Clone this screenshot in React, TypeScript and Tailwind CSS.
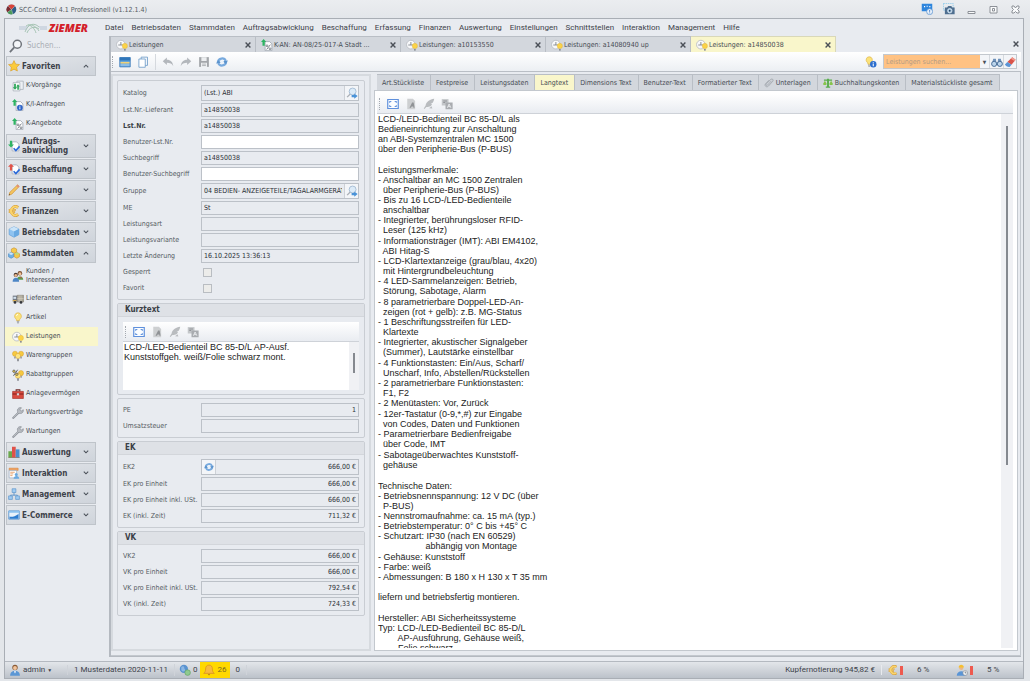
import React, { useState } from 'react';
import clsx from 'clsx';

type IconName =
  | 'logo' | 'search' | 'star' | 'docSwap' | 'docInfo' | 'docPercent' | 'order' | 'purchase' | 'pencil'
  | 'euro' | 'cube' | 'cubes' | 'people' | 'truck' | 'bulb' | 'service' | 'bulbs' | 'bulbsPercent'
  | 'case' | 'wrench' | 'chart' | 'interact' | 'org' | 'shop' | 'form' | 'copy' | 'undo' | 'redo'
  | 'save' | 'refresh' | 'bulbInfo' | 'binoculars' | 'eraser' | 'lens' | 'full' | 'fontDoc' | 'feather'
  | 'translate' | 'clip' | 'scales' | 'user' | 'globe' | 'bell' | 'worker' | 'monitor' | 'camera';

const bulb = (
  <>
    <path d="M8 1a4.6 4.6 0 0 0-2.8 8.2c.6.6.8 1.2.9 2.3h3.8c.1-1.100.3-1.700.9-2.300A4.600 4.600 0 0 0 8 1z" fill="#fbe27a" stroke="#dcae3c" strokeWidth=".8" />
    <path d="M6.400 12.300h3.200M6.600 13.600h2.800M7.200 14.800h1.600" stroke="#8b8f96" strokeWidth="1" />
    <path d="M6 5.200A2.300 2.300 0 0 1 8 3" stroke="#fff" strokeWidth="1.100" fill="none" />
  </>
);

const percentSheet = (
  <>
    <path d="M5.500 3.500h6l3 3v9h-9z" fill="#fff" stroke="#9aa1ab" />
    <path d="M12.500 7.500l-5 6.500" stroke="#555b64" strokeWidth="1" />
    <circle cx="8" cy="9" r="1.200" fill="none" stroke="#555b64" strokeWidth=".9" />
    <circle cx="12" cy="13" r="1.200" fill="none" stroke="#555b64" strokeWidth=".9" />
  </>
);

const upArrow = <path d="M3.500 0L7 4H5v5H2V4H0z" fill="#2fb463" />;

const checkSheet = (
  <>
    <path d="M5.500 2.500h6l3 3v9h-9z" fill="#fff" stroke="#9fa8b6" />
    <path d="M7.500 11l3 3L15.500 8.500" fill="none" stroke="#2968d8" strokeWidth="2.200" />
  </>
);

const icons: Record<IconName, React.ReactNode> = {
  logo: (
    <>
      <circle cx="8" cy="8" r="7" fill="#2f5d86" />
      <path d="M8 8L3 3a7 7 0 0 1 10 0z" fill="#d84339" />
      <path d="M8 8L3 3a7 7 0 0 0-1 9z" fill="#7c2b30" />
      <path d="M8 8l-6 4a7 7 0 0 0 8 2.700z" fill="#4a9a57" />
      <path d="M8 8l5-5M8 8l-6 4M8 8l2 7M8 8L3 3" stroke="#f4f4f4" strokeWidth=".5" />
    </>
  ),
  search: (
    <>
      <circle cx="9.500" cy="6" r="4.600" fill="#f4f6f9" stroke="#6f747b" strokeWidth="1.700" />
      <path d="M6 9.500L1 15" stroke="#6f747b" strokeWidth="2" />
    </>
  ),
  star: <path d="M8 .8l2.200 4.700 5.100.6-3.800 3.500 1 5.100L8 12.200l-4.500 2.500 1-5.100L.7 6.100l5.100-.6z" fill="#fbcb3c" stroke="#d99a1f" strokeWidth=".8" />,
  docSwap: (
    <>
      <path d="M6.500 1.500h8.500v11H6.500z" fill="#eef1f5" stroke="#a4abb5" />
      <path d="M1.500 3.500h9v11h-9z" fill="#fff" stroke="#a4abb5" />
      <path d="M2.800 5h2.400v4.500H7L4 13 1 9.500h1.800zM7 13V8.500H5.500L8 5.500l2.500 3H9.200V13z" fill="#2fa85c" />
    </>
  ),
  docInfo: (
    <>
      <path d="M5.500 3.500h6l3 3v9h-9z" fill="#fff" stroke="#9aa1ab" />
      {upArrow}
      <circle cx="10.500" cy="11.500" r="3.800" fill="#2d63c8" />
      <path d="M10.500 11v2.800M10.500 9v1.200" stroke="#fff" strokeWidth="1.300" />
    </>
  ),
  docPercent: <>{percentSheet}{upArrow}</>,
  order: <>{checkSheet}<path d="M2.500 1h3v5H8l-4 4-4-4h2.500z" fill="#2fb463" /></>,
  purchase: <>{checkSheet}<path d="M4 1L8 5H5.500v5h-3V5H0z" fill="#e05349" /></>,
  pencil: (
    <>
      <path d="M12.800 1l2.200 2.200L5 13.500 1.200 15l1.300-3.900z" fill="#f4c560" stroke="#c98a30" strokeWidth=".8" />
      <path d="M12.800 1l2.200 2.200-1.500 1.500-2.200-2.200z" fill="#e28a80" />
      <path d="M1.200 15l.5-1.700 1.200 1.100z" fill="#444" />
    </>
  ),
  euro: (
    <>
      <path d="M13.500 3.200A5.800 5.800 0 1 0 13.500 12.800" fill="none" stroke="#d39a34" strokeWidth="4" />
      <path d="M1 6.500h9.500M1 9.500h8.500" stroke="#d39a34" strokeWidth="2.200" />
      <path d="M13.200 3.600A5.600 5.600 0 1 0 13.200 12.400" fill="none" stroke="#fad46c" strokeWidth="2.600" />
      <path d="M1.500 6.500H10M1.500 9.500H9" stroke="#fad46c" strokeWidth="1.200" />
    </>
  ),
  cube: (
    <>
      <path d="M8 1l6.500 3v7.500L8 15l-6.500-3.500V4z" fill="#8fc3f0" stroke="#5c9ad2" strokeWidth=".8" />
      <path d="M8 1l6.500 3L8 7.200 1.500 4z" fill="#cbe4f8" />
      <path d="M8 7.200V15l6.500-3.500V4z" fill="#6aaae2" />
    </>
  ),
  cubes: (
    <>
      <path d="M8 1l3.500 1.700v4L8 8.500 4.500 6.700v-4z" fill="#f7c84a" stroke="#c08a28" strokeWidth=".7" />
      <path d="M4.200 7.200L7.700 9v4l-3.500 2L.7 13V9z" fill="#6fb0e6" stroke="#3f7fb8" strokeWidth=".7" />
      <path d="M11.800 7.200L15.300 9v4l-3.500 2-3.500-2V9z" fill="#f7c84a" stroke="#c08a28" strokeWidth=".7" />
      <path d="M8.300 9l3.500 1.600L15.300 9l-3.500-1.800z" fill="#b9dd7c" />
      <path d="M.7 9l3.500 1.600L7.700 9 4.200 7.200z" fill="#cde5f8" />
    </>
  ),
  people: (
    <>
      <circle cx="10.500" cy="4.200" r="3" fill="#7c4f2e" />
      <circle cx="10.500" cy="5" r="2" fill="#f1c39b" />
      <path d="M6.500 13c0-6 8.500-6 8.500 0z" fill="#5b9a4d" />
      <circle cx="5" cy="6.500" r="2.800" fill="#4c3a30" />
      <circle cx="5" cy="7.300" r="1.900" fill="#eab58a" />
      <path d="M.8 15.500c0-7 8.700-7 8.700 0z" fill="#4d86c6" />
      <path d="M11 9l1 3 1-3z" fill="#d64b40" />
    </>
  ),
  truck: (
    <>
      <path d="M1 3.500h6v8H1z" fill="#737a84" />
      <path d="M7 3h8.500v9H7z" fill="#a9a497" stroke="#6f6a5f" strokeWidth=".6" />
      <path d="M9.500 3v9M12 3v9M7 7.500h8.500" stroke="#e5dfcd" strokeWidth=".7" />
      <path d="M1.800 5h3.700v2.800H1.800z" fill="#d3e1ee" />
      <path d="M1 9.500h5v1.500H1z" fill="#e7b64b" />
      <circle cx="4" cy="12.500" r="1.800" fill="#33363b" />
      <circle cx="12" cy="12.500" r="1.800" fill="#33363b" />
    </>
  ),
  bulb,
  service: (
    <>
      <circle cx="6.500" cy="7.500" r="5.800" fill="#f7f8fa" stroke="#b3b7bd" strokeWidth="1" />
      <path d="M6.500 4v4h3.500M3 8h3.500" stroke="#6b7179" strokeWidth="1" fill="none" />
      <circle cx="11.800" cy="9.300" r="3.500" fill="#fbd348" stroke="#dcae3c" strokeWidth=".5" />
      <path d="M10.600 13.200h2.400v2.300h-2.400z" fill="#8c8f96" />
    </>
  ),
  bulbs: (
    <>
      <circle cx="4" cy="5" r="3.400" fill="#f7c93f" stroke="#d29b2a" strokeWidth=".6" />
      <circle cx="12" cy="5" r="3.400" fill="#f7c93f" stroke="#d29b2a" strokeWidth=".6" />
      <circle cx="8" cy="8" r="3.500" fill="#fde480" stroke="#d29b2a" strokeWidth=".6" />
      <path d="M6.800 11.500h2.400V15H6.800zM3 8.500h1.800v2.800H3zM11.200 8.500H13v2.800h-1.800z" fill="#8c8f96" />
    </>
  ),
  bulbsPercent: (
    <>
      <circle cx="12" cy="5.500" r="3.400" fill="#f7c93f" stroke="#d29b2a" strokeWidth=".6" />
      <circle cx="8" cy="9" r="3.500" fill="#fde480" stroke="#d29b2a" strokeWidth=".6" />
      <path d="M6.800 12.300h2.400V15.500H6.800zM11.500 9H13v2.800h-1.500z" fill="#8c8f96" />
      <path d="M7.500 1l-5.500 8" stroke="#4b4f56" strokeWidth="1.200" />
      <circle cx="2.600" cy="3" r="1.600" fill="#fbd348" stroke="#4b4f56" />
      <circle cx="6.500" cy="7" r="1.600" fill="#fbd348" stroke="#4b4f56" />
    </>
  ),
  case: (
    <>
      <path d="M5.500 4.500v-2h5v2" stroke="#6e2a26" strokeWidth="1.400" fill="none" />
      <path d="M.8 4.500h14.400v9.500H.8z" fill="#d8493e" stroke="#a02a22" strokeWidth=".8" />
      <path d="M.8 8h14.400" stroke="#7d201b" strokeWidth="1.300" />
      <path d="M6.500 7h3v2.800h-3z" fill="#d3d6da" />
    </>
  ),
  wrench: (
    <>
      <path d="M1.700 14.500L10 6.200" stroke="#8c9199" strokeWidth="2.800" strokeLinecap="round" />
      <path d="M15 3.600l-2.500 1.800-1.800-1.800L12.600 1A4 4 0 1 0 15 3.600z" fill="#b5b9bf" stroke="#858a92" strokeWidth=".8" />
      <path d="M2 14.200L10 6.200" stroke="#c9cdd2" strokeWidth="1.100" />
    </>
  ),
  chart: (
    <>
      <path d="M.5 7h4.800v8.500H.5z" fill="#6aa84c" />
      <path d="M5.300 1h5v14.500h-5z" fill="#e0524a" />
      <path d="M10.300 4.500h5v11h-5z" fill="#4c8fce" />
      <path d="M.5 15.500h15" stroke="#77624a" strokeWidth=".8" />
    </>
  ),
  interact: (
    <>
      <path d="M1.500 1.500h12v3h-12z" fill="#f4a460" stroke="#d18240" strokeWidth=".7" />
      <path d="M1.500 4.500h10v10h-10z" fill="#fff" stroke="#8b9fb8" strokeWidth=".8" />
      <path d="M3 7h6M3 9.200h4M3 11.500h3" stroke="#e08a45" strokeWidth="1" />
      <circle cx="11" cy="10" r="2" fill="#6aa9e0" />
      <path d="M7.500 15.500c0-4.800 7.500-4.800 7.500 0z" fill="#6aa9e0" />
    </>
  ),
  org: (
    <>
      <path d="M8 6v4M3.500 11.500V9.500h9v2" stroke="#5c94c9" strokeWidth="1.200" fill="none" />
      <path d="M5.500 1h5v5h-5zM.8 10.500h5v4.700h-5zM10.200 10.500h5v4.700h-5z" fill="#9fcbf2" stroke="#5c94c9" strokeWidth=".9" />
    </>
  ),
  shop: (
    <>
      <path d="M1 2.500h14v11H1z" fill="#e8f2fb" stroke="#5d96cf" strokeWidth="1.200" />
      <path d="M1 2.500h14v2.500H1z" fill="#8cc2ef" />
      <path d="M2 13V10c3 1 7 0 12-3.500V13z" fill="#2d7dd0" />
    </>
  ),
  form: (
    <>
      <path d="M1 2h14v12.500H1z" fill="#5fa3de" stroke="#3b78b5" strokeWidth="1" />
      <path d="M1 2h14v4H1z" fill="#2f76ba" />
      <path d="M2 9h12" stroke="#f0d27a" strokeWidth="2.200" />
      <path d="M2 12h12" stroke="#a9d0f2" strokeWidth="1.600" />
    </>
  ),
  copy: (
    <>
      <path d="M5.500 1.500h8.500v11H5.500z" fill="#f1f6fb" stroke="#6f9cc8" strokeWidth="1.100" />
      <path d="M2.500 4h8.500v11H2.500z" fill="#fff" stroke="#6f9cc8" strokeWidth="1.100" />
    </>
  ),
  undo: <path d="M1 7l5.500-5v3c5 0 8 3 8.500 8.500C13.500 10 10.500 9 6.500 9v3z" fill="#b3b7bc" />,
  redo: <path d="M15 7L9.500 2v3c-5 0-8 3-8.500 8.500C2.500 10 5.500 9 9.500 9v3z" fill="#b3b7bc" />,
  save: (
    <>
      <path d="M1.500 1.500h13v13h-13z" fill="#a3a6aa" />
      <path d="M4.500 1.500h7v5h-7zM4 9h8v5.500H4z" fill="#eceef0" />
      <path d="M5.500 10.800h5M5.500 12.700h5" stroke="#a3a6aa" />
    </>
  ),
  refresh: (
    <>
      <path d="M2.500 8.500C3 2.500 11 1.500 13 6.500M13.500 7.500c-.5 6-8.500 7-10.500 2" fill="none" stroke="#78aade" strokeWidth="3" />
      <path d="M16 6l-3 4.500-4-3.500zM0 10l3-4.500L7 9z" fill="#5b93cd" />
      <circle cx="8" cy="8" r="2.400" fill="#eaf2fb" />
    </>
  ),
  bulbInfo: (
    <>
      <path d="M5.500 1a4.200 4.200 0 0 0-2.400 7.500c.6.600.7 1.200.8 2.500h3.500c0-1.300.3-1.900.8-2.500A4.200 4.200 0 0 0 5.500 1z" fill="#fbe27a" stroke="#dcae3c" strokeWidth=".8" />
      <path d="M4 12.200h3.200M4.400 13.800h2.400" stroke="#8b8f96" />
      <circle cx="11" cy="11" r="4.300" fill="#2d6fce" />
      <path d="M11 10.300v3.200M11 8.200v1.300" stroke="#fff" strokeWidth="1.400" />
    </>
  ),
  binoculars: (
    <>
      <path d="M3 3.500h3.500L7.500 11H1zM9.500 3.500H13L15 11H8.500z" fill="#6f92ba" />
      <circle cx="4.200" cy="10.500" r="3.400" fill="#bcd5ec" stroke="#4a6f98" strokeWidth="1.300" />
      <circle cx="11.800" cy="10.500" r="3.400" fill="#bcd5ec" stroke="#4a6f98" strokeWidth="1.300" />
    </>
  ),
  eraser: (
    <>
      <path d="M11 1.500L15.500 5 10 11.500 4.500 8z" fill="#d9544a" />
      <path d="M4.500 8L10 11.500 7.500 14.500C6.500 15.500 1.500 13 1.200 11.300z" fill="#5c95d6" />
      <path d="M11 1.500L15.500 5 14 6.800 9 3.500z" fill="#f19a8c" />
    </>
  ),
  lens: (
    <>
      <circle cx="8.800" cy="6" r="4.600" fill="#dcebf8" stroke="#a9bfd6" strokeWidth="1.300" />
      <path d="M5.500 9.500L1.500 13.500" stroke="#a9aeb6" strokeWidth="1.800" />
      <path d="M7.500 10.500h3.500V8.500l4.500 3.500-4.500 3.500v-2H7.500z" fill="#4a93d8" />
    </>
  ),
  full: (
    <>
      <path d="M1 2h14v12H1z" fill="#fbfdff" stroke="#5f90dc" strokeWidth="1.600" />
      <path d="M3 4h3.500L3 7zM13 4H9.500L13 7zM3 12h3.500L3 9zM13 12H9.500L13 9z" fill="#5f90dc" />
    </>
  ),
  fontDoc: (
    <>
      <path d="M3 1h7.500L13.500 4v11H3z" fill="#cdcfd1" />
      <path d="M9.500 6L6 13h2l.8-1.800H11l.3 1.800h1.500L11.500 6z" fill="#8f9295" />
    </>
  ),
  feather: <path d="M15 1C9 2 4 5 3.500 10L1 14l1 .8L4.500 12c5 0 7-2 7.500-4.500l-2-.3 3-.9c1-1.800 1.700-3.500 2-5.300zM8 13.500l3.500-2.500 1 3z" fill="#b9bcbf" />,
  translate: (
    <>
      <path d="M1 1.500h9v8.500H1z" fill="#c3c6c9" />
      <path d="M6 6h9.500v9H6z" fill="#a9acb0" />
      <path d="M3 4h5M3 6h2.500" stroke="#8d9094" strokeWidth="1.200" />
      <path d="M8.500 13L10.800 8l2.400 5M9.500 11.500h2.600" stroke="#eceef0" strokeWidth="1.200" fill="none" />
    </>
  ),
  clip: <path d="M12 4.500l-6.500 7a1.400 1.400 0 0 1-2-2L11 2.200c2.300-1.800 4.800.7 3 3L7 13c-3 3-7-.8-4.500-3.800L8 3.500" fill="none" stroke="#989da4" strokeWidth="1.200" />,
  scales: (
    <>
      <path d="M6.500 1h3v13h-3zM1.500 2.500h13v2h-13zM4.500 13.500h7v2h-7z" fill="#58ad4c" />
      <path d="M0 9.500l3-5 3 5c-1 2.500-5 2.500-6 0zM10 9.500l3-5 3 5c-1 2.500-5 2.500-6 0z" fill="#86c44c" />
    </>
  ),
  user: (
    <>
      <circle cx="8" cy="4.500" r="3.600" fill="#8a5a34" />
      <circle cx="8" cy="5.300" r="2.600" fill="#f2c49c" />
      <path d="M1.500 15.500c0-8.500 13-8.500 13 0z" fill="#5b97d5" />
      <path d="M6.500 9.500L8 12.500l1.500-3z" fill="#fff" />
    </>
  ),
  globe: (
    <>
      <circle cx="6.500" cy="6.500" r="5.500" fill="#5a93d0" />
      <path d="M3 4c2-2 4-1 4 1s2 2 1 4-4 1-5-1z" fill="#8bb7e4" />
      <circle cx="11.500" cy="11.500" r="3.700" fill="#8fca90" stroke="#5f9f62" strokeWidth=".8" />
    </>
  ),
  bell: (
    <>
      <path d="M8 1.500c-3 0-4.500 2-4.500 5 0 3-.8 4.500-2.500 6h14c-1.700-1.500-2.500-3-2.500-6 0-3-1.500-5-4.500-5z" fill="#f8b93d" stroke="#d5891f" strokeWidth=".9" />
      <path d="M6.500 13.500a1.500 1.500 0 0 0 3 0z" fill="#b26f1a" />
    </>
  ),
  worker: (
    <>
      <circle cx="7" cy="5.200" r="2.800" fill="#eab787" />
      <path d="M3.500 4.500c0-4.500 7-4.500 7 0z" fill="#f5bf2f" />
      <path d="M1 15.500c0-8 12-8 12 0z" fill="#5a95d6" />
      <circle cx="12.300" cy="12" r="3.200" fill="#eef1f4" stroke="#878c93" strokeWidth=".8" />
      <path d="M12.300 10v2h1.600" stroke="#555" strokeWidth=".8" fill="none" />
    </>
  ),
  monitor: (
    <>
      <path d="M1 1h14v10h-4l-3 3v-3H1z" fill="#2f86dd" />
      <path d="M4 4h1.500v1.500H4zM7.500 3.500H9V5H7.500zM11 4h1.500v1.500H11z" fill="#fff" />
      <circle cx="11.500" cy="11.500" r="4" fill="#e8f1fb" stroke="#5a92cf" />
      <path d="M11.500 9.500v2.200M11.500 12.800v1" stroke="#2f6fc0" strokeWidth="1.200" />
    </>
  ),
  camera: (
    <>
      <path d="M.5.500h13v9H.5z" fill="none" stroke="#7cc4ea" strokeDasharray="2 1" />
      <path d="M2.500 6h3L7 4h4l1.500 2H15.500v9h-13z" fill="#4f6f90" />
      <circle cx="9" cy="10.300" r="3" fill="#a9cdea" stroke="#e9eef3" strokeWidth=".9" />
      <circle cx="9" cy="10.300" r="1.200" fill="#2c4763" />
    </>
  ),
};

const Icon = ({ name, className = 'size-3' }: { name: IconName; className?: string }) => (
  <svg viewBox="0 0 16 16" aria-hidden="true" className={clsx('shrink-0', className)}>
    {icons[name]}
  </svg>
);

const Chevron = ({ up }: { up?: boolean }) => (
  <svg viewBox="0 0 6 4" aria-hidden="true" className="h-1 w-1.5 shrink-0">
    <path d={up ? 'M.8 3.400L3 1.200l2.200 2.200' : 'M.8.600L3 2.800 5.200.600'} fill="none" stroke="#4d535b" strokeWidth="1.100" />
  </svg>
);

const Cross = () => (
  <svg viewBox="0 0 6 6" aria-hidden="true" className="size-1.5 shrink-0">
    <path d="M.6.600l4.800 4.800M5.400.600L.6 5.400" stroke="#4b5058" strokeWidth="1.400" />
  </svg>
);

const Grip = () => <span className="h-3 w-px shrink-0 border-l border-dotted border-[#a4a9b0]" />;

const MENU = [
  'Datei', 'Betriebsdaten', 'Stammdaten', 'Auftragsabwicklung', 'Beschaffung', 'Erfassung', 'Finanzen',
  'Auswertung', 'Einstellungen', 'Schnittstellen', 'Interaktion', 'Management', 'Hilfe',
];

interface NavItem {
  label: string;
  icon: IconName;
  tall?: boolean;
}

interface NavGroup extends NavItem {
  items?: NavItem[];
}

const NAV: NavGroup[] = [
  {
    label: 'Favoriten',
    icon: 'star',
    items: [
      { label: 'K-Vorgänge', icon: 'docSwap' },
      { label: 'K/I-Anfragen', icon: 'docInfo' },
      { label: 'K-Angebote', icon: 'docPercent' },
    ],
  },
  { label: 'Auftrags-\nabwicklung', icon: 'order', tall: true },
  { label: 'Beschaffung', icon: 'purchase' },
  { label: 'Erfassung', icon: 'pencil' },
  { label: 'Finanzen', icon: 'euro' },
  { label: 'Betriebsdaten', icon: 'cube' },
  {
    label: 'Stammdaten',
    icon: 'cubes',
    items: [
      { label: 'Kunden /\nInteressenten', icon: 'people', tall: true },
      { label: 'Lieferanten', icon: 'truck' },
      { label: 'Artikel', icon: 'bulb' },
      { label: 'Leistungen', icon: 'service' },
      { label: 'Warengruppen', icon: 'bulbs' },
      { label: 'Rabattgruppen', icon: 'bulbsPercent' },
      { label: 'Anlagevermögen', icon: 'case' },
      { label: 'Wartungsverträge', icon: 'wrench' },
      { label: 'Wartungen', icon: 'wrench' },
    ],
  },
  { label: 'Auswertung', icon: 'chart' },
  { label: 'Interaktion', icon: 'interact' },
  { label: 'Management', icon: 'org' },
  { label: 'E-Commerce', icon: 'shop' },
];

const DOC_TABS: NavItem[] = [
  { label: 'Leistungen', icon: 'service' },
  { label: 'K-AN: AN-08/25-017-A Stadt ...', icon: 'docPercent' },
  { label: 'Leistungen: a10153550', icon: 'service' },
  { label: 'Leistungen: a14080940 up', icon: 'service' },
  { label: 'Leistungen: a14850038', icon: 'service' },
];

const DETAIL_TABS: { label: string; icon?: IconName }[] = [
  { label: 'Art.Stückliste' },
  { label: 'Festpreise' },
  { label: 'Leistungsdaten' },
  { label: 'Langtext' },
  { label: 'Dimensions Text' },
  { label: 'Benutzer-Text' },
  { label: 'Formatierter Text' },
  { label: 'Unterlagen', icon: 'clip' },
  { label: 'Buchhaltungskonten', icon: 'scales' },
  { label: 'Materialstückliste gesamt' },
];

const LANGTEXT = [
  `LCD-/LED-Bedienteil BC 85-D/L als
Bedieneinrichtung zur Anschaltung
an ABI-Systemzentralen MC 1500
über den Peripherie-Bus (P-BUS)
 `,
  `Leistungsmerkmale:
- Anschaltbar an MC 1500 Zentralen
  über Peripherie-Bus (P-BUS)
- Bis zu 16 LCD-/LED-Bedienteile
  anschaltbar
- Integrierter, berührungsloser RFID-
  Leser (125 kHz)`,
  `- Informationsträger (IMT): ABI EM4102,
  ABI Hitag-S
- LCD-Klartextanzeige (grau/blau, 4x20)
  mit Hintergrundbeleuchtung
- 4 LED-Sammelanzeigen: Betrieb,
  Störung, Sabotage, Alarm`,
  `- 8 parametrierbare Doppel-LED-An-
  zeigen (rot + gelb): z.B. MG-Status
- 1 Beschriftungsstreifen für LED-
  Klartexte
- Integrierter, akustischer Signalgeber
  (Summer), Lautstärke einstellbar`,
  `- 4 Funktionstasten: Ein/Aus, Scharf/
  Unscharf, Info, Abstellen/Rückstellen
- 2 parametrierbare Funktionstasten:
  F1, F2
- 2 Menütasten: Vor, Zurück`,
  `- 12er-Tastatur (0-9,*,#) zur Eingabe
  von Codes, Daten und Funktionen
- Parametrierbare Bedienfreigabe
  über Code, IMT`,
  `- Sabotageüberwachtes Kunststoff-
  gehäuse
 `,
  `Technische Daten:
- Betriebsnennspannung: 12 V DC (über
  P-BUS)
- Nennstromaufnahme: ca. 15 mA (typ.)
- Betriebstemperatur: 0° C bis +45° C
- Schutzart: IP30 (nach EN 60529)
                   abhängig von Montage`,
  `- Gehäuse: Kunststoff
- Farbe: weiß
- Abmessungen: B 180 x H 130 x T 35 mm
 
liefern und betriebsfertig montieren.
 `,
  `Hersteller: ABI Sicherheitssysteme
Typ: LCD-/LED-Bedienteil BC 85-D/L
        AP-Ausführung, Gehäuse weiß,
        Folie schwarz`,
];

const KURZTEXT = `LCD-/LED-Bedienteil BC 85-D/L AP-Ausf.
Kunststoffgeh. weiß/Folie schwarz mont.`;

interface FieldProps {
  id: string;
  label: string;
  value?: string;
  bold?: boolean;
  editable?: boolean;
  numeric?: boolean;
  lookup?: boolean;
  recalc?: boolean;
}

const Field = ({ id, label, value = '', bold, editable, numeric, lookup, recalc }: FieldProps) => (
  <div className={clsx('flex items-center', lookup || recalc ? 'h-4' : 'h-3.5')}>
    <label htmlFor={id} className={clsx('w-[78px] shrink-0 whitespace-nowrap', bold ? 'font-bold text-[#3a3f46]' : 'text-[#555b63]')}>
      {label}
    </label>
    <div className={clsx('flex h-full min-w-0 flex-1 border border-[#bcc1c8]', editable ? 'bg-white' : 'bg-[#e8ebf0]')}>
      {recalc && (
        <button type="button" aria-label="Neu berechnen" className="flex w-3.5 items-center justify-center border-r border-[#cdd1d7] bg-[#f3f5f8]">
          <Icon name="refresh" className="size-2.5" />
        </button>
      )}
      <input
        id={id}
        defaultValue={value}
        readOnly={!editable}
        className={clsx('h-full min-w-0 flex-1 bg-transparent px-0.5 text-[#2a2e34] outline-none', numeric && 'text-right')}
      />
      {lookup && (
        <button type="button" aria-label={`${label} suchen`} className="flex w-3.5 items-center justify-center border-l border-[#cdd1d7] bg-[#f3f5f8]">
          <Icon name="lens" />
        </button>
      )}
    </div>
  </div>
);

const Group = ({ title, children }: { title?: string; children: React.ReactNode }) => (
  <section className="rounded-xs border border-[#c9cdd3]">
    {title && (
      <h2 className="h-[13px] border-b border-[#d3d6db] bg-[#dee1e6] px-[7px] text-[8px] leading-[12px] font-bold text-[#3a3f46]">{title}</h2>
    )}
    <div className="flex flex-col gap-0.5 px-[5px] py-1">{children}</div>
  </section>
);

const EditorToolbar = () => (
  <div className="flex h-5 shrink-0 items-center gap-1.5 border-b border-[#ced2d8] bg-linear-to-b from-white to-[#e9ecf1] pl-0.5">
    <Grip />
    <button type="button" aria-label="Vollbild" className="ml-px"><Icon name="full" /></button>
    <button type="button" aria-label="Schrift" disabled><Icon name="fontDoc" /></button>
    <button type="button" aria-label="Rechtschreibung" disabled><Icon name="feather" /></button>
    <button type="button" aria-label="Übersetzen" disabled><Icon name="translate" /></button>
  </div>
);

const Sidebar = () => {
  const [current, setCurrent] = useState('Leistungen');

  return (
    <nav className="w-[104px] shrink-0 text-[7px]">
      <label className="flex h-5 items-center gap-1 pl-1">
        <Icon name="search" className="size-3.5" />
        <input type="search" placeholder="Suchen..." className="w-16 bg-transparent text-[8px] outline-none placeholder:text-[#a9aeb5]" />
      </label>
      {NAV.map((group) => (
        <div key={group.label} className="mb-px">
          <button
            type="button"
            aria-expanded={!!group.items}
            className={clsx(
              'ml-px flex w-[90px] items-center gap-0.5 border border-[#bfc4ca] bg-linear-to-br from-[#e3e6ea] to-[#cfd4db] pr-1.5 pl-px text-left text-[8px] leading-[9px] font-bold whitespace-pre text-[#3c4149]',
              group.tall ? 'h-6' : 'h-5',
            )}
          >
            <Icon name={group.icon} />
            <span className="flex-1">{group.label}</span>
            <Chevron up={!!group.items} />
          </button>
          {group.items && (
            <ul>
              {group.items.map((item) => (
                <li key={item.label}>
                  <button
                    type="button"
                    onClick={() => setCurrent(item.label)}
                    className={clsx(
                      'flex w-[93px] items-center gap-0.5 pl-[7px] text-left leading-[9px] whitespace-pre text-[#474c54]',
                      item.tall ? 'h-[26px]' : 'h-[19px]',
                      current === item.label && 'bg-[#f9f6cb]',
                    )}
                  >
                    <Icon name={item.icon} />
                    {item.label}
                  </button>
                </li>
              ))}
            </ul>
          )}
        </div>
      ))}
    </nav>
  );
};

const DocumentTabs = () => (
  <div className="flex h-4 shrink-0 items-stretch" role="tablist">
    {DOC_TABS.map((tab, i) => {
      const active = i === DOC_TABS.length - 1;
      return (
        <div
          key={tab.label}
          className={clsx(
            'flex w-[145px] shrink items-center border-t border-r pr-1',
            active ? 'border-[#d9d8b8] bg-[#f9f6cb]' : 'border-[#b9bec5] bg-[#d3d7dd]',
          )}
        >
          <button type="button" role="tab" aria-selected={active} className="flex min-w-0 flex-1 items-center gap-px pl-[5px] whitespace-nowrap text-[#474c54]">
            <Icon name={tab.icon} />
            {tab.label}
          </button>
          <button type="button" aria-label="Tab schließen"><Cross /></button>
        </div>
      );
    })}
    <button type="button" aria-label="Alle schließen" className="mr-0.5 ml-auto"><Cross /></button>
  </div>
);

const Toolbar = () => (
  <div className="flex h-5 shrink-0 items-center border-b border-[#b9bec5] bg-linear-to-b from-white to-[#eceff3] pr-1 pl-px">
    <Grip />
    <div className="ml-1.5 flex items-center gap-1.5">
      <button type="button" aria-label="Formular"><Icon name="form" /></button>
      <button type="button" aria-label="Kopieren"><Icon name="copy" /></button>
      <span className="h-4 w-px bg-[#d5d9de]" />
      <button type="button" aria-label="Rückgängig" disabled><Icon name="undo" /></button>
      <button type="button" aria-label="Wiederholen" disabled><Icon name="redo" /></button>
      <button type="button" aria-label="Speichern" disabled><Icon name="save" /></button>
      <button type="button" aria-label="Aktualisieren"><Icon name="refresh" /></button>
    </div>
    <button type="button" aria-label="Hinweis" className="mr-1.5 ml-auto"><Icon name="bulbInfo" /></button>
    <div className="flex h-[15px] items-stretch border border-[#c3c8ce] bg-[#f3f5f8]">
      <input type="search" aria-label="Leistungen suchen" placeholder="Leistungen suchen..." className="w-24 bg-[#ffc283] px-0.5 outline-none placeholder:text-[#b39b83]" />
      <button type="button" aria-label="Suchverlauf" className="w-2.5 border-r border-[#d5d9de] text-[5px] text-[#4b5058]">▼</button>
      <button type="button" aria-label="Suchen" className="flex w-3.5 items-center justify-center border-r border-[#d5d9de]"><Icon name="binoculars" /></button>
      <button type="button" aria-label="Leeren" className="flex w-3 items-center justify-center"><Icon name="eraser" /></button>
    </div>
  </div>
);

const MasterData = () => (
  <div className="flex w-[260px] shrink-0 flex-col gap-[3px] overflow-hidden border-2 border-[#d6dadf] p-1">
    <Group>
      <Field id="katalog" label="Katalog" value="(Lst.) ABI" lookup />
      <Field id="lieferant" label="Lst.Nr.-Lieferant" value="a14850038" />
      <Field id="nr" label="Lst.Nr." value="a14850038" bold />
      <Field id="benutzer-nr" label="Benutzer-Lst.Nr." editable />
      <Field id="suchbegriff" label="Suchbegriff" value="a14850038" />
      <Field id="benutzer-such" label="Benutzer-Suchbegriff" editable />
      <Field id="gruppe" label="Gruppe" value="04 BEDIEN- ANZEIGETEILE/TAGALARMGERÄTE" lookup />
      <Field id="me" label="ME" value="St" />
      <Field id="art" label="Leistungsart" />
      <Field id="variante" label="Leistungsvariante" />
      <Field id="aenderung" label="Letzte Änderung" value="16.10.2025 13:36:13" />
      {['Gesperrt', 'Favorit'].map((label) => (
        <div key={label} className="flex h-3.5 items-center text-[#555b63]">
          <label htmlFor={label} className="w-20 shrink-0">{label}</label>
          <input id={label} type="checkbox" className="size-[9px] appearance-none border border-[#b9bdc2] bg-[#ececea]" />
        </div>
      ))}
    </Group>
    <Group title="Kurztext">
      <div className="mt-px">
        <EditorToolbar />
        <div className="flex h-12 bg-white">
          <textarea
            aria-label="Kurztext"
            defaultValue={KURZTEXT}
            className="min-w-0 flex-1 resize-none overflow-hidden px-px font-['Liberation_Sans',Arial,sans-serif] text-[9px] leading-[10px] whitespace-pre text-[#222] outline-none"
          />
          <div className="flex w-2.5 justify-center bg-[#f0f1f4] pt-[11px]">
            <span className="h-5 w-0.5 bg-[#85898f]" />
          </div>
        </div>
      </div>
    </Group>
    <Group>
      <Field id="pe" label="PE" value="1" numeric />
      <Field id="ust" label="Umsatzsteuer" numeric />
    </Group>
    <Group title="EK">
      <Field id="ek2" label="EK2" value="666,00 €" numeric recalc />
      <Field id="ek-einheit" label="EK pro Einheit" value="666,00 €" numeric />
      <Field id="ek-ust" label="EK pro Einheit inkl. USt." value="666,00 €" numeric />
      <Field id="ek-zeit" label="EK (inkl. Zeit)" value="711,32 €" numeric />
    </Group>
    <Group title="VK">
      <Field id="vk2" label="VK2" value="666,00 €" numeric />
      <Field id="vk-einheit" label="VK pro Einheit" value="666,00 €" numeric />
      <Field id="vk-ust" label="VK pro Einheit inkl. USt." value="792,54 €" numeric />
      <Field id="vk-zeit" label="VK (inkl. Zeit)" value="724,33 €" numeric />
    </Group>
  </div>
);

const Details = () => {
  const [tab, setTab] = useState('Langtext');

  return (
    <div className="flex min-w-0 flex-1 flex-col">
      <div role="tablist" className="flex h-4 shrink-0 items-stretch overflow-hidden pl-[3px]">
        {DETAIL_TABS.map(({ label, icon }) => (
          <button
            key={label}
            type="button"
            role="tab"
            aria-selected={tab === label}
            onClick={() => setTab(label)}
            className={clsx(
              'flex items-center gap-0.5 border-t border-r border-[#b9bec5] pr-1.5 pl-[5px] whitespace-nowrap text-[#474c54]',
              tab === label ? 'bg-[#f9f6cb]' : 'bg-[#d3d7dd]',
            )}
          >
            {icon && <Icon name={icon} className="size-2.5" />}
            {label}
          </button>
        ))}
      </div>
      <div className="flex min-h-0 flex-1 flex-col border border-[#c3c8ce] bg-white pt-[3px] pr-1 pb-0.5 pl-0.5">
        <EditorToolbar />
        <div className="flex min-h-0 flex-1">
          <div
            role="textbox"
            aria-multiline="true"
            aria-label="Langtext"
            contentEditable
            suppressContentEditableWarning
            className="flex min-w-0 flex-1 flex-col gap-px overflow-hidden px-px font-['Liberation_Sans',Arial,sans-serif] text-[9px] leading-[10px] whitespace-pre text-[#222] outline-none"
          >
            {LANGTEXT.map((block) => (
              <p key={block} className="shrink-0">{block}</p>
            ))}
          </div>
          <div className="flex w-3 justify-center bg-[#f0f1f4] pt-3">
            <span className="h-[65%] w-0.5 bg-[#85898f]" />
          </div>
        </div>
      </div>
    </div>
  );
};

const StatusBar = () => (
  <footer className="flex h-[17px] shrink-0 items-center border-t border-[#b4b9c0] bg-linear-to-b from-[#e3e6ea] to-[#bcc2ca] pr-1 pl-1 font-[Roboto,'Noto_Sans',sans-serif] text-[8px] whitespace-nowrap text-[#3d424a]">
    <button type="button" className="flex w-[58px] items-center gap-0.5">
      <Icon name="user" />
      admin<span className="text-[5px]">▼</span>
    </button>
    <span className="border-l border-[#cfd3d9] pl-1.5">1 Musterdaten 2020-11-11</span>
    <span className="ml-1.5 flex items-center gap-0.5 border-l border-[#cfd3d9] pr-0.5 pl-1"><Icon name="globe" />0</span>
    <span className="flex h-full items-center gap-[3px] bg-[#ffd800] px-[3px] text-[#7a6a20]"><Icon name="bell" />26</span>
    <span className="border-r border-[#cfd3d9] px-1.5">0</span>
    <span className="ml-auto border-r border-[#e8eaee] pr-1.5">Kupfernotierung 945,82 €</span>
    <span className="flex w-[70px] items-center gap-0.5 pl-1.5">
      <Icon name="euro" className="size-2.5" />
      <span className="mr-3 h-[9px] w-[3px] bg-[#ee5a4f]" />6 %
    </span>
    <span className="flex w-[67px] items-center gap-0.5 pl-1">
      <Icon name="worker" />
      <span className="mr-3 h-[9px] w-[3px] bg-[#ee5a4f]" />5 %
    </span>
  </footer>
);

const TitleBar = () => (
  <header className="flex h-[18px] shrink-0 items-center gap-0.5 bg-linear-to-b from-[#ebedf0] to-[#e3e6ea] pr-[9px] pl-1.5">
    <Icon name="logo" className="size-[11px]" />
    <h1 className="flex-1 pt-0.5 font-['DejaVu_Sans_Condensed','DejaVu_Sans',sans-serif] text-[7px] text-[#555b63]">
      SCC-Control 4.1 Professionell (v1.12.1.4)
    </h1>
    <div className="flex items-center gap-2.5">
      <button type="button" aria-label="Fernwartung"><Icon name="monitor" /></button>
      <button type="button" aria-label="Screenshot"><Icon name="camera" /></button>
      {['M1 6.500h7v2H1z', 'M1 1.500h7v6.500H1zM3.500 3.500h2v2.500h-2z', 'M1 1h2l1.500 2L6 1h2v2L6.500 4.500 8 6v2H6L4.500 6.500 3 8H1V6l1.500-1.500L1 3z'].map((d, i) => (
        <button key={d} type="button" aria-label={['Minimieren', 'Wiederherstellen', 'Schließen'][i]} className="flex w-3 justify-center">
          <svg viewBox="0 0 9 9" className="size-[9px]">
            <path d={d} fill="#fafbfc" stroke="#81868d" strokeWidth=".9" />
          </svg>
        </button>
      ))}
    </div>
  </header>
);

const MenuBar = () => (
  <div className="flex h-[17px] shrink-0 items-center">
    <div className="flex w-[100px] shrink-0 items-center gap-0.5 pl-3.5">
      <svg viewBox="0 0 28 12" aria-hidden="true" className="h-3 w-7">
        <path d="M0 5h9M20 5h8M0 7h8M21 7h7" stroke="#b5c4d2" strokeWidth="1.200" />
        <path d="M6 10c3-8 9-10 14-5M8 11c2-6 8-7 12-4M7 4c4-3 10 0 13 5M9 3c3 0 7 4 8 8" fill="none" stroke="#9fbfae" strokeWidth=".9" />
      </svg>
      <span className="font-['Open_Sans','Noto_Sans',sans-serif] text-[11px] font-extrabold text-[#d3202a] italic">ZiEMER</span>
    </div>
    <nav className="flex gap-2 font-[Roboto,'Noto_Sans',sans-serif] text-[8px] text-[#3d424a]">
      {MENU.map((entry) => (
        <button key={entry} type="button">{entry}</button>
      ))}
    </nav>
  </div>
);

export default function App() {
  return (
    <div className="flex h-screen flex-col overflow-hidden bg-[#e3e6ea] pb-0.5 font-['DejaVu_Sans_Condensed','DejaVu_Sans',sans-serif] text-[7px] leading-[10px]">
      <TitleBar />
      <div className="mr-[6px] ml-1 flex min-h-0 flex-1 flex-col border border-[#a9aeb5] bg-[#e8ebf0]">
        <MenuBar />
        <div className="flex min-h-0 flex-1">
          <Sidebar />
          <main className="mr-0.5 mb-1 flex min-w-0 flex-1 flex-col border-b border-l-2 border-[#b4b9c0]">
            <DocumentTabs />
            <Toolbar />
            <div className="flex min-h-0 flex-1 gap-[3px] border-r border-b border-[#c3c8ce] pt-0.5 pr-0.5 pb-1">
              <MasterData />
              <Details />
            </div>
          </main>
        </div>
        <StatusBar />
      </div>
    </div>
  );
}
